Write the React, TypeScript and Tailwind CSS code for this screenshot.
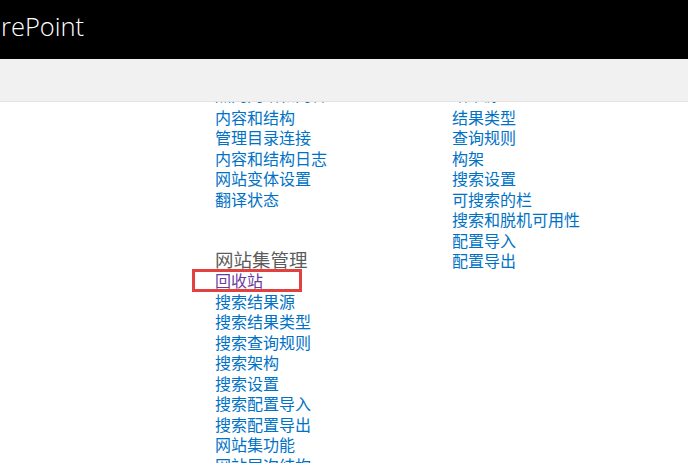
const leftTop = ['热门网站和内容', '内容和结构', '管理目录连接', '内容和结构日志', '网站变体设置', '翻译状态'];

const siteCollection = [
  { label: '回收站', visited: true },
  { label: '搜索结果源' },
  { label: '搜索结果类型' },
  { label: '搜索查询规则' },
  { label: '搜索架构' },
  { label: '搜索设置' },
  { label: '搜索配置导入' },
  { label: '搜索配置导出' },
  { label: '网站集功能' },
  { label: '网站层次结构' },
  { label: '网站集导航' },
];

const searchLinks = ['结果源', '结果类型', '查询规则', '构架', '搜索设置', '可搜索的栏', '搜索和脱机可用性', '配置导入', '配置导出'];

function LinkRow({ label, visited, first }: { label: string; visited?: boolean; first?: boolean }) {
  return (
    <li className="h-[20.5px] leading-[20.5px]">
      <a
        href="#"
        className={
          (visited ? 'text-[#6b3a9e]' : 'text-[#0072c6]') +
          ' whitespace-nowrap' +
          (first ? ' relative -top-[2px]' : '')
        }
      >
        {label}
      </a>
    </li>
  );
}

export default function App() {
  return (
    <div
      className="relative h-[463px] w-[688px] overflow-hidden bg-white"
      style={{ fontFamily: '"Noto Sans CJK SC", "Noto Sans", sans-serif' }}
    >
      {/* Suite bar */}
      <div className="flex h-[59px] items-center bg-black">
        <span
          className="pl-[1px] text-[25.5px] font-light leading-none text-white -mt-[5px]"
          style={{ fontFamily: '"Open Sans", "Noto Sans", sans-serif' }}
        >
          rePoint
        </span>
      </div>

      {/* Ribbon */}
      <div className="h-[43px] border-b border-[#e3e3e3] bg-[#f1f1f1]" />

      {/* Settings content (scrolled) */}
      <div className="h-[361px] overflow-hidden">
        <div className="-mt-[16px] flex pl-[215px] text-[16px]">
          <div className="w-[237px]">
            <ul>
              {leftTop.map((l, i) => (
                <LinkRow key={l} label={l} first={i === 0} />
              ))}
            </ul>
            <h3 className="mt-[39px] h-[22px] text-[18.5px] leading-[22px] font-normal text-[#5c5c5c]">
              网站集管理
            </h3>
            <ul>
              {siteCollection.map((l) => (
                <LinkRow key={l.label} label={l.label} visited={l.visited} />
              ))}
            </ul>
          </div>
          <div>
            <ul>
              {searchLinks.map((l, i) => (
                <LinkRow key={l} label={l} first={i === 0} />
              ))}
            </ul>
          </div>
        </div>
      </div>

      {/* Highlight annotation */}
      <div className="absolute left-[192px] top-[269px] h-[23px] w-[110px] border-[3px] border-[#e2413f]" />
    </div>
  );
}
